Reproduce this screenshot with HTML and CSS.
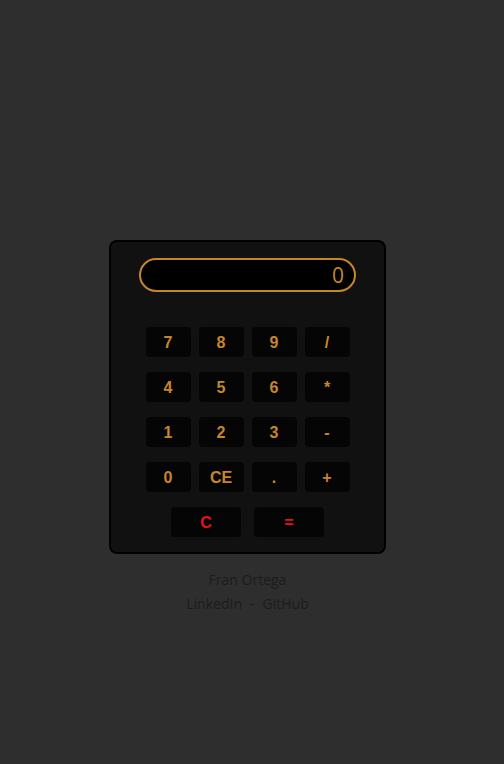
FILE: index.html
```html
<!DOCTYPE html>
<html lang="es">
<head>
<meta charset="utf-8">
<title>Calculadora</title>
<link rel="stylesheet" href="styles.css">
</head>
<body>
<main class="page">
  <div class="calculator">
    <div class="display">0</div>
    <div class="keys">
      <button class="key">7</button>
      <button class="key">8</button>
      <button class="key">9</button>
      <button class="key">/</button>
      <button class="key">4</button>
      <button class="key">5</button>
      <button class="key">6</button>
      <button class="key">*</button>
      <button class="key">1</button>
      <button class="key">2</button>
      <button class="key">3</button>
      <button class="key">-</button>
      <button class="key">0</button>
      <button class="key">CE</button>
      <button class="key">.</button>
      <button class="key">+</button>
    </div>
    <div class="actions">
      <button class="key key-wide key-red">C</button>
      <button class="key key-wide key-red">=</button>
    </div>
  </div>
  <footer class="credits">
    <p class="name">Fran Ortega</p>
    <p class="links"><a href="#">LinkedIn</a><span class="sep">-</span><a href="#">GitHub</a></p>
  </footer>
</main>
</body>
</html>
```
FILE: styles.css
```css
html, body {
  margin: 0;
  padding: 0;
  background: #2e2e2e;
}
.page {
  box-sizing: border-box;
  width: 495px;
  min-height: 764px;
  padding-top: 240px;
  display: flex;
  flex-direction: column;
  align-items: center;
}
.calculator {
  box-sizing: border-box;
  width: 277px;
  height: 314px;
  background: #111111;
  border: 2px solid #000;
  border-radius: 8px;
  padding: 16px 28px 0;
}
.display {
  box-sizing: border-box;
  height: 34px;
  border: 2px solid #c8862a;
  border-radius: 17px;
  background: #000;
  color: #c8862a;
  font-family: "Open Sans", sans-serif;
  font-size: 21px;
  line-height: 31px;
  text-align: right;
  padding-right: 10px;
}
.keys {
  margin-top: 35px;
  display: grid;
  grid-template-columns: repeat(4, 45px);
  column-gap: 8px;
  row-gap: 15px;
  justify-content: center;
}
.key {
  height: 30px;
  border: none;
  border-radius: 4px;
  background: #050505;
  color: #c8862a;
  font-family: "Liberation Sans", Arial, sans-serif;
  font-weight: bold;
  font-size: 16px;
  padding: 1px 0 0;
}
.actions {
  margin-top: 15px;
  display: flex;
  justify-content: center;
  gap: 13px;
}
.key-wide {
  width: 70px;
}
.key-red {
  color: #e8101a;
}
.credits {
  margin-top: 14px;
  text-align: center;
  font-family: "Open Sans", sans-serif;
  font-size: 14px;
  color: #1c1c1c;
}
.credits p {
  margin: 0;
  line-height: 24px;
}
.credits a {
  color: #1c1c1c;
  text-decoration: none;
}
.sep {
  margin: 0 8px;
}
```
